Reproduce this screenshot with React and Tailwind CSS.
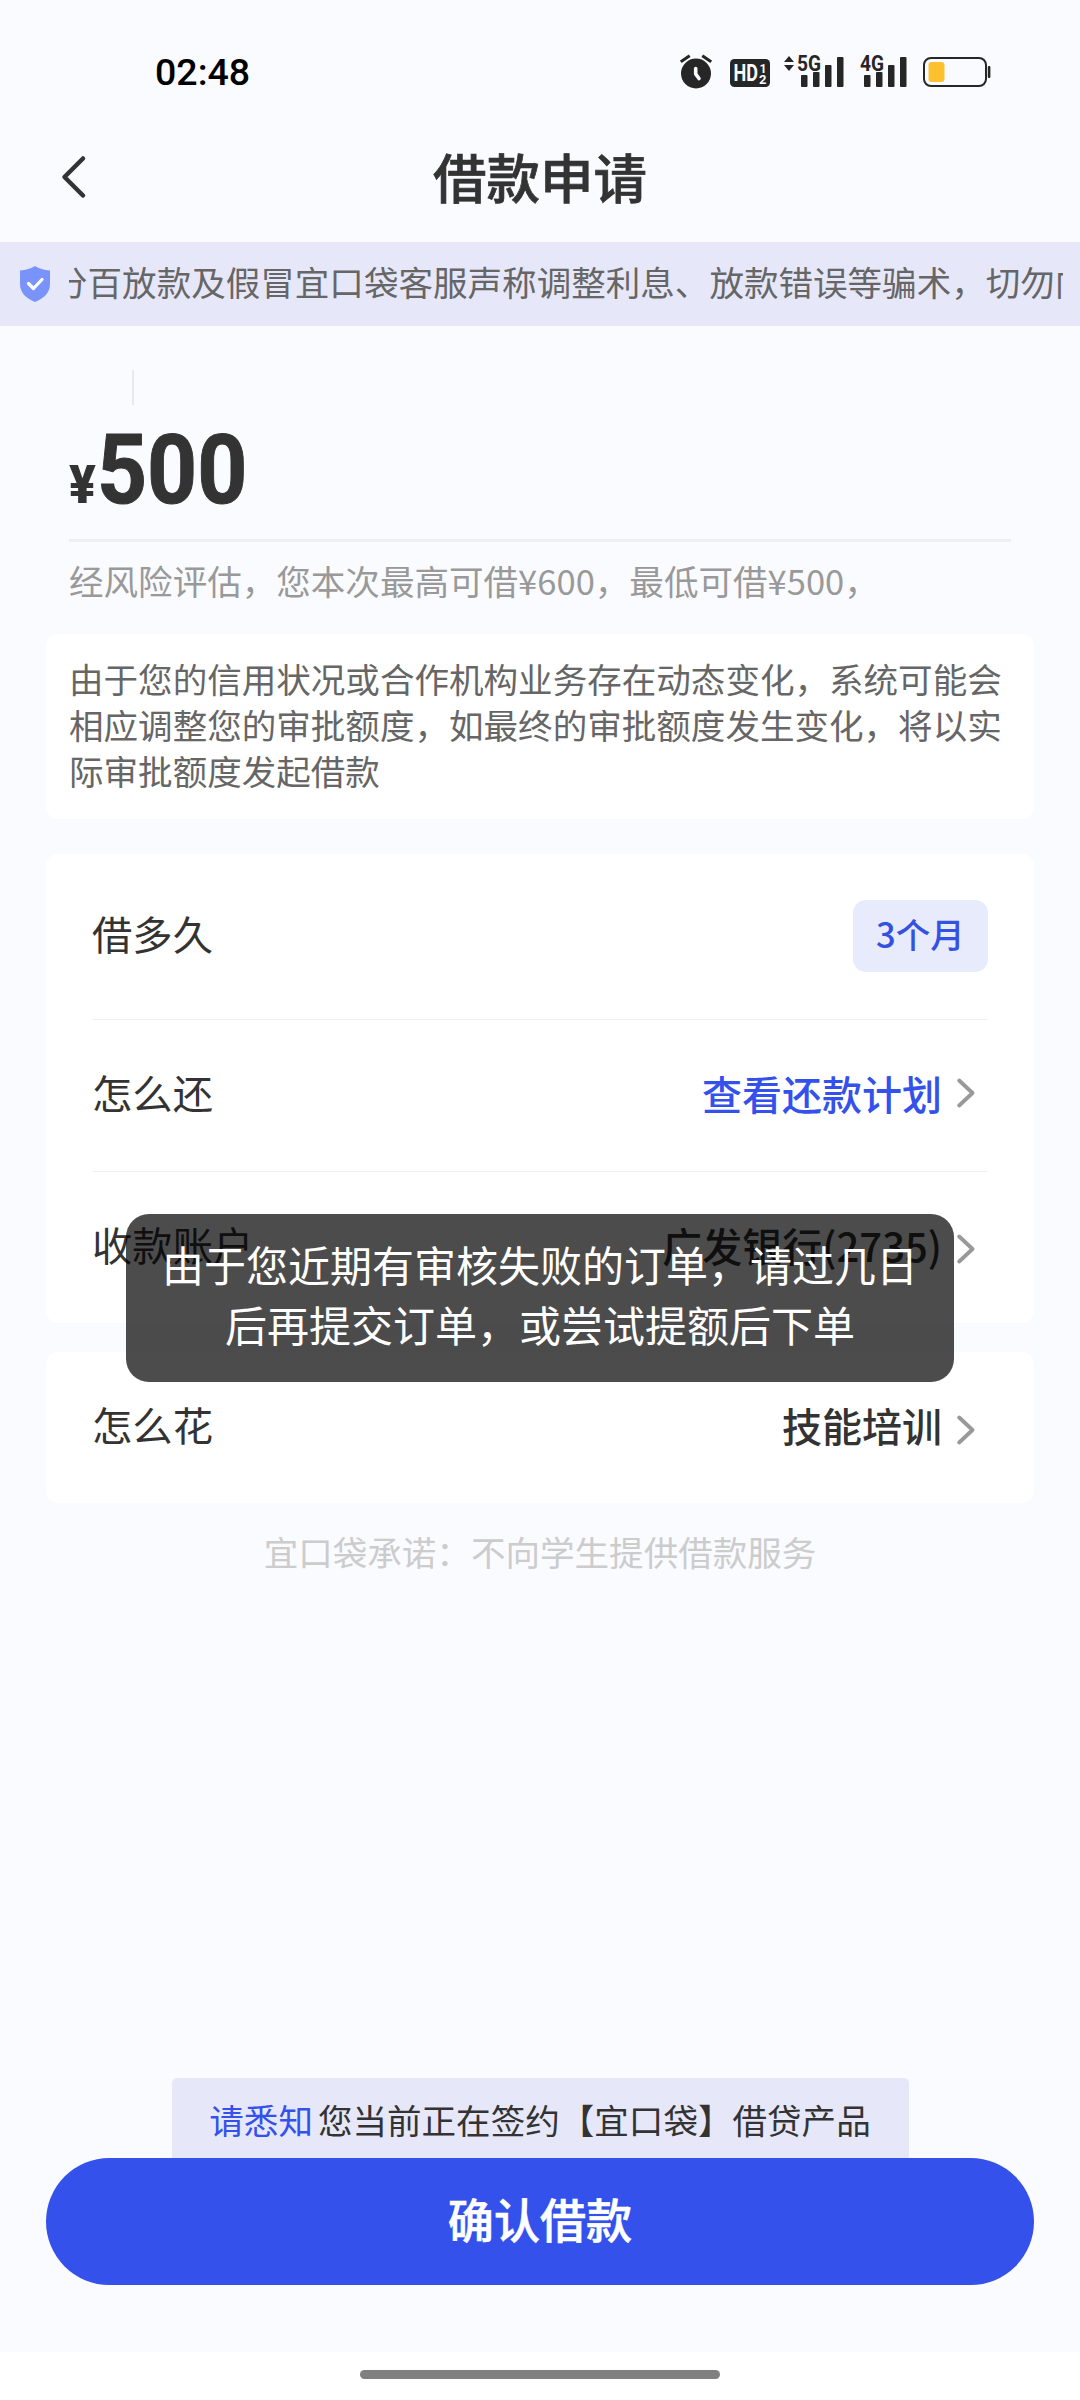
const ink = "#262626";

function AlarmIcon() {
  return (
    <svg width="32" height="36" viewBox="0 0 32 36" fill="none">
      <circle cx="16" cy="19.5" r="15" fill={ink} />
      <path d="M2 7 L8.500 2.500 M30 7 L23.500 2.500" stroke={ink} strokeWidth="3" strokeLinecap="square" />
      <path d="M15.700 14.500 V20 L19 24.500" stroke="#fafbff" strokeWidth="3.600" strokeLinecap="round" strokeLinejoin="round" />
    </svg>
  );
}

function HdIcon() {
  return (
    <svg width="40" height="28" viewBox="0 0 40 28" className="font-['Roboto',sans-serif] font-bold">
      <rect width="40" height="28" rx="4.500" fill={ink} />
      <text x="3.500" y="22" fontSize="23" textLength="24.500" lengthAdjust="spacingAndGlyphs" fill="#fafbff">HD</text>
      <text x="29.500" y="13.500" fontSize="12.500" fill="#fafbff">1</text>
      <text x="29" y="25" fontSize="13" fill="#fafbff">2</text>
    </svg>
  );
}

function SignalIcon({ label, arrows }) {
  return (
    <svg width="62" height="34" viewBox="0 0 62 34" fill={ink} className="overflow-visible font-['Roboto',sans-serif] font-bold">
      <rect x="17" y="20" width="6.500" height="12" rx="1" />
      <rect x="29" y="17" width="6.500" height="15" rx="1" />
      <rect x="41" y="10" width="6.500" height="22" rx="1" />
      <rect x="53" y="2" width="6.500" height="30" rx="1" />
      {arrows && <path d="M0 7 L5 1 L10 7 Z M0 10 L5 16 L10 10 Z" />}
      <text x="13" y="16" fontSize="22" textLength="24" lengthAdjust="spacingAndGlyphs">{label}</text>
    </svg>
  );
}

function BatteryIcon() {
  return (
    <svg width="68" height="30" viewBox="0 0 68 30" fill="none">
      <rect x="1" y="1" width="62" height="28" rx="7" stroke={ink} strokeWidth="2" />
      <rect x="5.500" y="5" width="16" height="20" rx="3" fill="#fdc02f" />
      <rect x="64.800" y="9" width="2.600" height="12" rx="1" fill={ink} />
    </svg>
  );
}

function Chevron({ className }) {
  return (
    <svg width="18" height="30" viewBox="0 0 18 30" fill="none" className={className}>
      <path d="M2.200 2.500 L15.500 15 L2.200 27.500" stroke="#999" strokeWidth="3.800" strokeLinecap="round" strokeLinejoin="round" />
    </svg>
  );
}

function Row({ label, value, tone, chevron }) {
  return (
    <div className="flex h-[151px] items-center justify-between pb-[6px]">
      <span>{label}</span>
      <span className="flex items-center gap-[15px] pr-[13px]">
        <span className={`text-[40px] font-medium ${tone}`}>{value}</span>
        <Chevron className={chevron} />
      </span>
    </div>
  );
}

export default function App() {
  return (
    <div className="relative flex h-[2400px] w-[1080px] flex-col overflow-hidden bg-[#fafbff] font-['Noto_Sans_CJK_SC',sans-serif] text-[34.560px] text-[#333]">
      <header className="flex h-[113px] shrink-0 items-start justify-between pl-[155px] pr-[89px]">
        <span className="mt-[49px] font-['Roboto',sans-serif] text-[37.500px] font-medium leading-[46px] text-black">02:48</span>
        <div className="mt-[54px] flex h-[36px] items-start">
          <AlarmIcon />
          <span className="ml-[18px] mt-[5px]"><HdIcon /></span>
          <span className="ml-[14px] mt-px"><SignalIcon label="5G" arrows /></span>
          <span className="ml-px mt-px"><SignalIcon label="4G" /></span>
          <span className="ml-[14px] mt-[3px]"><BatteryIcon /></span>
        </div>
      </header>

      <nav className="flex h-[127px] shrink-0 items-center">
        <svg width="28" height="44" viewBox="0 0 28 44" fill="none" className="ml-[60px]">
          <path d="M23 3.500 L4.500 22 L23 40.500" stroke="#333" strokeWidth="4.500" strokeLinecap="round" strokeLinejoin="round" />
        </svg>
        <h1 className="mb-[2px] mr-[88px] flex-1 text-center text-[53.500px] font-medium leading-[60px] [-webkit-text-stroke:0.7px]">借款申请</h1>
      </nav>

      <div className="mt-[2px] flex h-[84px] shrink-0 items-center bg-[#e6e8fa] pl-5 pr-[17px]">
        <svg width="30" height="36" viewBox="0 0 30 36" fill="none">
          <path d="M15 0 C19 2.500 24 4 30 4.500 V18 C30 27 24 32 15 36 C6 32 0 27 0 18 V4.500 C6 4 11 2.500 15 0 Z" fill="#7a93fb" />
          <path d="M8.500 17.500 L13.500 22.500 L22 13.500" stroke="#fff" strokeWidth="3.200" strokeLinecap="round" strokeLinejoin="round" />
        </svg>
        <div className="mb-[7px] ml-[19px] flex-1 overflow-hidden whitespace-nowrap leading-[50px] text-[#666]">
          <span className="-ml-[16px]">分百放款及假冒宜口袋客服声称调整利息、放款错误等骗术，切勿向</span>
        </div>
      </div>

      <section className="mx-[69px] flex h-[308px] shrink-0 flex-col">
        <div className="ml-[63px] mt-[44px] h-[35px] w-[2px] bg-[#e9e9ec]" />
        <div className="mt-[6px] flex h-[128px] items-baseline font-['Roboto',sans-serif] font-bold leading-[118px]">
          <span className="w-[28px] origin-left scale-x-[0.92] text-[54px] font-black">¥</span>
          <span className="origin-left scale-x-[0.91] text-[96px] [-webkit-text-stroke:1px]">500</span>
        </div>
        <div className="h-[3px] shrink-0 bg-[#eeeff1]" />
        <p className="mt-[13px] leading-[50px] text-[#999]">经风险评估，您本次最高可借¥600，最低可借¥500，</p>
      </section>

      <section className="mx-[46px] h-[185px] shrink-0 rounded-[12px] bg-white px-[23px] py-[21px] leading-[46px] text-[#666]">
        由于您的信用状况或合作机构业务存在动态变化，系统可能会相应调整您的审批额度，如最终的审批额度发生变化，将以实际审批额度发起借款
      </section>

      <section className="mx-[46px] mt-[35px] h-[469px] shrink-0 rounded-[12px] bg-white px-[46px] text-[40.320px]">
        <div className="flex h-[165px] items-center justify-between">
          <span className="mb-[7px]">借多久</span>
          <span className="mb-[2px] flex h-[72px] w-[135px] items-center justify-center rounded-[13px] bg-[#e8ebfc] pb-[4px] text-[34.560px] font-medium text-[#3451e0]">3个月</span>
        </div>
        <div className="h-px bg-[#eee]" />
        <Row label="怎么还" value="查看还款计划" tone="text-[#3451eb]" chevron="mt-[1px]" />
        <div className="h-px bg-[#eee]" />
        <Row label="收款账户" value="广发银行(2735)" tone="text-[#333]" chevron="mt-[8px]" />
      </section>

      <section className="mx-[46px] mt-[29px] shrink-0 rounded-[12px] bg-white px-[46px] text-[40.320px]">
        <Row label="怎么花" value="技能培训" tone="text-[#333]" chevron="mt-[10px]" />
      </section>

      <p className="mt-[23px] text-center leading-[50px] text-[#ccc]">宜口袋承诺：不向学生提供借款服务</p>

      <footer className="mt-auto flex shrink-0 flex-col items-center">
        <div className="flex h-[80px] w-[737px] items-center justify-center gap-[5px] whitespace-nowrap rounded-t-[5px] bg-[#e6e8fa] pt-[4px]">
          <span className="text-[#3451eb]">请悉知</span>
          <span>您当前正在签约【宜口袋】借贷产品</span>
        </div>
        <button className="h-[127px] w-[988px] rounded-full bg-[#3451eb] pb-[5px] text-[46.080px] font-medium text-white [-webkit-text-stroke:0.6px]">确认借款</button>
        <div className="mt-[67px] flex h-[48px] w-full justify-center bg-white pt-[18px]">
          <div className="h-[9px] w-[360px] rounded-full bg-[#808080]" />
        </div>
      </footer>

      <div className="absolute left-[126px] top-[1214px] h-[168px] w-[828px] rounded-[23px] bg-black/70 px-[35px] py-[20px] text-center text-[42px] leading-[60px] text-white">
        由于您近期有审核失败的订单，请过几日
        <br />
        后再提交订单，或尝试提额后下单
      </div>
    </div>
  );
}
